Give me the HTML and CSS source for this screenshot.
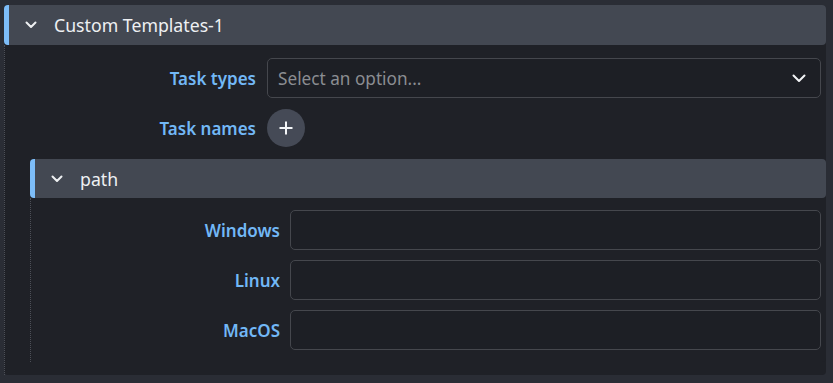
FILE: index.html
```html
<!DOCTYPE html>
<html lang="en">

<head>
    <meta charset="utf-8">
    <title>Custom Templates</title>
    <link rel="stylesheet" href="styles.css">
</head>

<body>

    <section class="group">
        <div class="group-header">
            <svg class="chevron" viewBox="0 0 12 8" width="12" height="8"><path d="M1.5 1.5 L6 6 L10.5 1.5" /></svg>
            <span class="group-title">Custom Templates-1</span>
        </div>
        <div class="group-body">
            <div class="field-row">
                <label class="field-label" for="task-types">Task types</label>
                <div class="select">
                    <span class="select-placeholder">Select an option...</span>
                    <svg class="select-arrow" viewBox="0 0 14 9" width="14" height="9"><path d="M1.5 1.5 L7 7 L12.5 1.5" /></svg>
                </div>
            </div>
            <div class="field-row">
                <span class="field-label">Task names</span>
                <button class="add-button" type="button" aria-label="Add task name">
                    <svg viewBox="0 0 16 16" width="16" height="16"><path d="M8 1.5 V14.5 M1.5 8 H14.5" /></svg>
                </button>
            </div>

            <!-- nested group -->
            <section class="group group-nested">
                <div class="group-header">
                    <svg class="chevron" viewBox="0 0 12 8" width="12" height="8"><path d="M1.5 1.5 L6 6 L10.5 1.5" /></svg>
                    <span class="group-title">path</span>
                </div>
                <div class="group-body">
                    <div class="field-row">
                        <label class="field-label" for="windows">Windows</label>
                        <input class="text-input" type="text" id="windows">
                    </div>
                    <div class="field-row">
                        <label class="field-label" for="linux">Linux</label>
                        <input class="text-input" type="text" id="linux">
                    </div>
                    <div class="field-row">
                        <label class="field-label" for="macos">MacOS</label>
                        <input class="text-input" type="text" id="macos">
                    </div>
                </div>
            </section>
        </div>
    </section>

</body>

</html>
```

FILE: styles.css
```css
* {
    margin: 0;
    padding: 0;
    box-sizing: border-box;
}

body {
    font-family: "Noto Sans", sans-serif;
    font-size: 17px;
    background-color: #2a2d35;
    padding: 5px 7px 7px 4px;
    height: 383px;
}

/** Collapsible group **/
.group {
    background-color: #1f2127;
    border-radius: 4px;
}

.group-header {
    display: flex;
    align-items: center;
    height: 40px;
    background-color: #434852;
    border-left: 5px solid #7dbdf8;
    border-radius: 4px;
    padding-left: 16px;
    color: #eef0f2;
}

.chevron {
    fill: none;
    stroke: #eef0f2;
    stroke-width: 2;
    stroke-linecap: round;
    stroke-linejoin: round;
    margin-right: 17px;
}

.group-title {
    font-size: 17.7px;
}

.group-body {
    border-left: 1px dotted #4c4f57;
    padding: 13px 0 13px 0;
    display: flex;
    flex-direction: column;
    gap: 11px;
}

.group-nested {
    margin-left: 25px;
    margin-top: 1px;
}

.group-nested .group-header {
    height: 39px;
}

.group-nested .group-body {
    padding: 12px 0 12px 0;
    gap: 10px;
}

/** Rows **/
.field-row {
    display: flex;
    align-items: center;
    gap: 11px;
    padding-right: 5px;
}

.field-label {
    flex: 0 0 251px;
    text-align: right;
    color: #72b8f6;
    font-weight: 600;
    font-size: 17px;
}

.group-nested .field-label {
    flex-basis: 249px;
}

.group-nested .field-row {
    gap: 10px;
}

.select,
.text-input {
    flex: 1;
    height: 40px;
    border: 1px solid #45474d;
    border-radius: 5px;
    background-color: #1d1f25;
}

.select {
    display: flex;
    align-items: center;
    justify-content: space-between;
    padding: 0 14px 0 10px;
}

.select-placeholder {
    color: #8b8d92;
    font-size: 17.2px;
}

.select-arrow {
    fill: none;
    stroke: #f2f4f6;
    stroke-width: 2;
    stroke-linecap: round;
    stroke-linejoin: round;
}

.add-button {
    width: 38px;
    height: 38px;
    border: 0;
    border-radius: 50%;
    background-color: #454a56;
    display: flex;
    align-items: center;
    justify-content: center;
}

.add-button svg {
    stroke: #f4f6f8;
    stroke-width: 2;
}
```
